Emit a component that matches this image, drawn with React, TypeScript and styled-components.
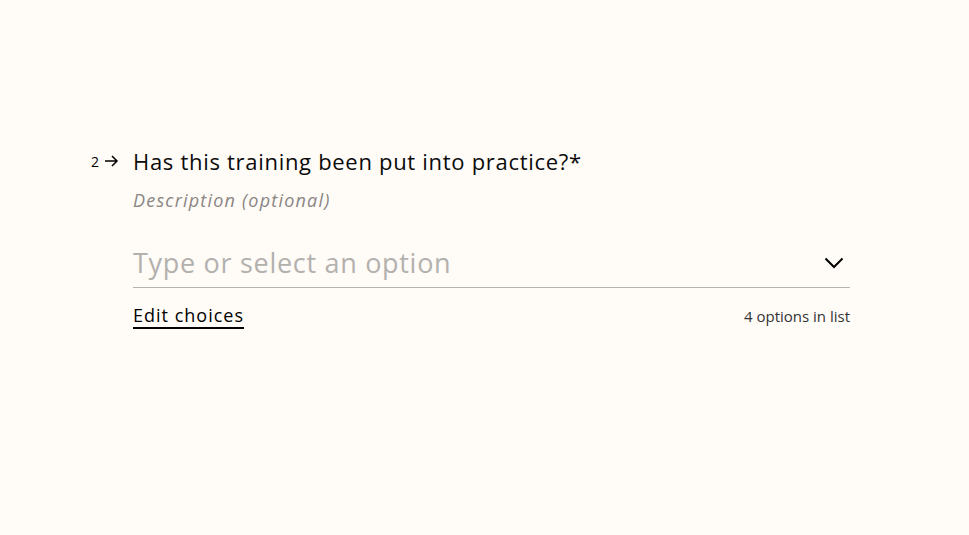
import React from "react";
import styled, { createGlobalStyle } from "styled-components";

const Global = createGlobalStyle`
  html, body { margin: 0; padding: 0; background: #fffbf7; }
  body { font-family: "Open Sans", "Liberation Sans", sans-serif; }
`;

const Page = styled.div`
  width: 969px;
  height: 535px;
  background: #fffbf7;
  box-sizing: border-box;
  padding: 147px 0 0 91px;
`;

const Question = styled.div`
  display: flex;
  align-items: flex-start;
`;

const Counter = styled.div`
  display: flex;
  align-items: center;
  gap: 5px;
  width: 42px;
  height: 28px;
  color: #000;
  font-size: 14px;
`;

const Body = styled.div`
  width: 717px;
  display: flex;
  flex-direction: column;
`;

const Title = styled.h1`
  margin: 0;
  font-size: 22px;
  font-weight: 400;
  letter-spacing: 0.7px;
  line-height: 28px;
  color: #0b0b0b;
`;

const Description = styled.div`
  margin-top: 13px;
  font-size: 18px;
  font-style: italic;
  letter-spacing: 1.2px;
  color: #8a8683;
  line-height: 24px;
`;

const Field = styled.div`
  margin-top: 27px;
  display: flex;
  align-items: center;
  justify-content: space-between;
  height: 48px;
  border-bottom: 1px solid #b5b3b0;
`;

const Placeholder = styled.span`
  font-size: 27px;
  letter-spacing: 0.7px;
  color: #b3b1ae;
  line-height: 36px;
`;

const Footer = styled.div`
  margin-top: 15px;
  display: flex;
  justify-content: space-between;
  align-items: baseline;
`;

const EditLink = styled.a`
  font-size: 18px;
  letter-spacing: 1px;
  color: #000;
  text-decoration: underline;
  text-decoration-thickness: 1.5px;
  text-underline-offset: 5px;
`;

const Count = styled.span`
  font-size: 15px;
  color: #333;
`;

export default function App() {
  return (
    <>
      <Global />
      <Page>
        <Question>
          <Counter>
            <span>2</span>
            <svg width="15" height="14" viewBox="0 0 15 14" fill="none" stroke="#000" strokeWidth="1.5">
              <path d="M1 7h12.5M8 2l5 5-5 5" />
            </svg>
          </Counter>
          <Body>
            <Title>Has this training been put into practice?*</Title>
            <Description>Description (optional)</Description>
            <Field>
              <Placeholder>Type or select an option</Placeholder>
              <svg width="20" height="12" viewBox="0 0 20 12" fill="none" stroke="#000" strokeWidth="2" style={{ marginRight: 6 }}>
                <path d="M1.5 1.5 10 10l8.5-8.5" />
              </svg>
            </Field>
            <Footer>
              <EditLink>Edit choices</EditLink>
              <Count>4 options in list</Count>
            </Footer>
          </Body>
        </Question>
      </Page>
    </>
  );
}
